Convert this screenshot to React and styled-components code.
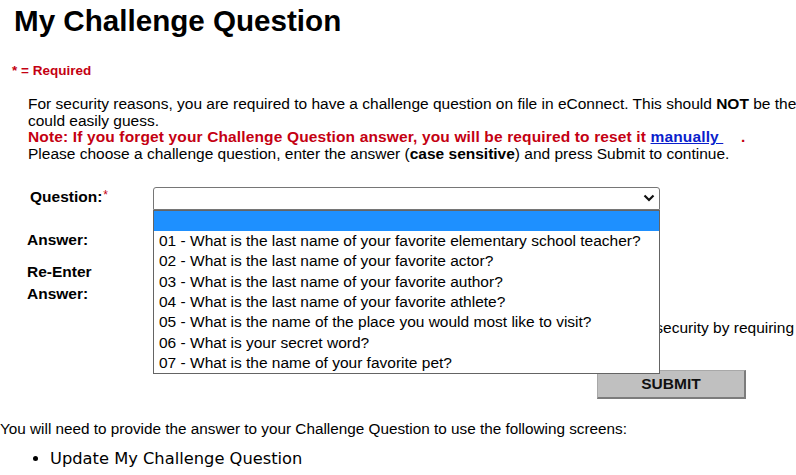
import React from 'react';
import styled, { createGlobalStyle } from 'styled-components';

const GlobalStyle = createGlobalStyle`
  html, body {
    margin: 0;
    padding: 0;
    overflow: hidden;
    background: #fff;
  }
  body {
    font-family: "Liberation Sans", Arial, sans-serif;
    color: #000;
  }
`;

const QUESTIONS = [
  '01 - What is the last name of your favorite elementary school teacher?',
  '02 - What is the last name of your favorite actor?',
  '03 - What is the last name of your favorite author?',
  '04 - What is the last name of your favorite athlete?',
  '05 - What is the name of the place you would most like to visit?',
  '06 - What is your secret word?',
  '07 - What is the name of your favorite pet?',
];

const Page = styled.div`
  width: 1000px;
  padding-top: 4px;
`;

const Title = styled.h1`
  margin: 0 0 0 14px;
  font-size: 29.6px;
  line-height: 34px;
  font-weight: bold;
`;

const Required = styled.div`
  margin: 25px 0 0 12px;
  font-size: 13.5px;
  line-height: 16px;
  font-weight: bold;
  color: #c40012;
`;

const Intro = styled.p`
  margin: 17px 0 0 28px;
  font-size: 15.5px;
  line-height: 16.7px;
  white-space: nowrap;
`;

const Warning = styled.span`
  color: #c40012;
  font-weight: bold;
  letter-spacing: 0.14px;
`;

const Link = styled.a`
  color: #0a1ecc;
  text-decoration: underline;
  cursor: pointer;
`;

const Form = styled.div`
  margin: 21px 0 0 27px;
  font-size: 15.5px;
`;

const Row = styled.div`
  display: flex;
  align-items: flex-start;
  gap: 16px;
  margin-top: ${(p) => p.$space || 0}px;
`;

const Label = styled.div`
  width: 110px;
  flex: none;
  font-weight: bold;
  line-height: 22px;
  padding-left: ${(p) => p.$indent || 0}px;
  box-sizing: border-box;
`;

const Star = styled.span`
  color: #c40012;
  font-weight: normal;
  font-size: 12px;
  vertical-align: 3px;
  margin-left: 1px;
`;

const SelectWrap = styled.div`
  position: relative;
  margin-top: 3px;
  width: 507px;
`;

const SelectBox = styled.div`
  box-sizing: border-box;
  height: 23px;
  border: 1px solid #767676;
  border-radius: 3px 3px 0 0;
  background: #fff;
  display: flex;
  align-items: center;
  justify-content: flex-end;
  padding-right: 4px;
`;

const Menu = styled.ul`
  position: absolute;
  z-index: 5;
  top: 100%;
  left: 0;
  width: 100%;
  box-sizing: border-box;
  margin: 0;
  padding: 0;
  list-style: none;
  background: #fff;
  border: 1px solid #646464;
`;

const Option = styled.li`
  height: 20.3px;
  line-height: 20.3px;
  padding-left: 5px;
  white-space: nowrap;
  background: ${(p) => (p.$active ? '#1e90ff' : '#fff')};
  color: ${(p) => (p.$active ? '#fff' : '#000')};
`;

const TextInput = styled.input`
  box-sizing: border-box;
  width: 260px;
  height: 22px;
  border: 1px solid #767676;
  font: inherit;
`;

const Note = styled.div`
  line-height: 22px;
  white-space: nowrap;
  padding-left: 100px;
`;

const Actions = styled.div`
  margin: 31px 0 0 597px;
`;

const SubmitButton = styled.button`
  box-sizing: border-box;
  width: 149px;
  height: 29px;
  background: #c0c0c0;
  border-style: solid;
  border-width: 1px 2px 2px 1px;
  border-color: #a8a8a8 #7c7c7c #7c7c7c #a8a8a8;
  font-family: "Liberation Sans", Arial, sans-serif;
  font-size: 15.5px;
  font-weight: bold;
  color: #111;
  padding: 0;
`;

const Footer = styled.p`
  margin: 20.7px 0 0 0;
  font-size: 15.3px;
  line-height: 17px;
`;

const Screens = styled.ul`
  margin: 12.6px 0 0 0;
  padding-left: 50px;
  font-family: "DejaVu Sans", Verdana, sans-serif;
  font-size: 16.3px;
  line-height: 20px;
`;

const Chevron = () => (
  <svg width="12" height="8" viewBox="0 0 12 8">
    <polyline points="1.5,1.5 6,6 10.5,1.5" fill="none" stroke="#111" strokeWidth="2.2" />
  </svg>
);

export default function App() {
  return (
    <Page>
      <GlobalStyle />
      <Title>My Challenge Question</Title>
      <Required>* = Required</Required>
      <Intro>
        For security reasons, you are required to have a challenge question on file in eConnect. This should{' '}
        <b>NOT</b> be the answer to something that someone
        <br />
        could easily guess.
        <br />
        <Warning>
          Note: If you forget your Challenge Question answer, you will be required to reset it{' '}
          <Link>manually&nbsp;</Link>&nbsp;&nbsp;&nbsp;&nbsp;.
        </Warning>
        <br />
        Please choose a challenge question, enter the answer (<b>case sensitive</b>) and press Submit to continue.
      </Intro>

      <Form>
        <Row>
          <Label $indent={3}>
            Question:<Star>*</Star>
          </Label>
          <SelectWrap>
            <SelectBox>
              <Chevron />
            </SelectBox>
            <Menu>
              <Option $active>&nbsp;</Option>
              {QUESTIONS.map((q) => (
                <Option key={q}>{q}</Option>
              ))}
            </Menu>
          </SelectWrap>
        </Row>
        <Row $space={19}>
          <Label>Answer:</Label>
          <TextInput type="password" />
        </Row>
        <Row $space={10}>
          <Label>Re-Enter Answer:</Label>
          <TextInput type="password" />
        </Row>
        <Row $space={12}>
          <Label />
          <Note>
            Registering this computer will give your account additional security by requiring&nbsp;&nbsp;the answer elsewhere.
          </Note>
        </Row>
      </Form>

      <Actions>
        <SubmitButton type="button">SUBMIT</SubmitButton>
      </Actions>

      <Footer>You will need to provide the answer to your Challenge Question to use the following screens:</Footer>
      <Screens>
        <li>Update My Challenge Question</li>
      </Screens>
    </Page>
  );
}
